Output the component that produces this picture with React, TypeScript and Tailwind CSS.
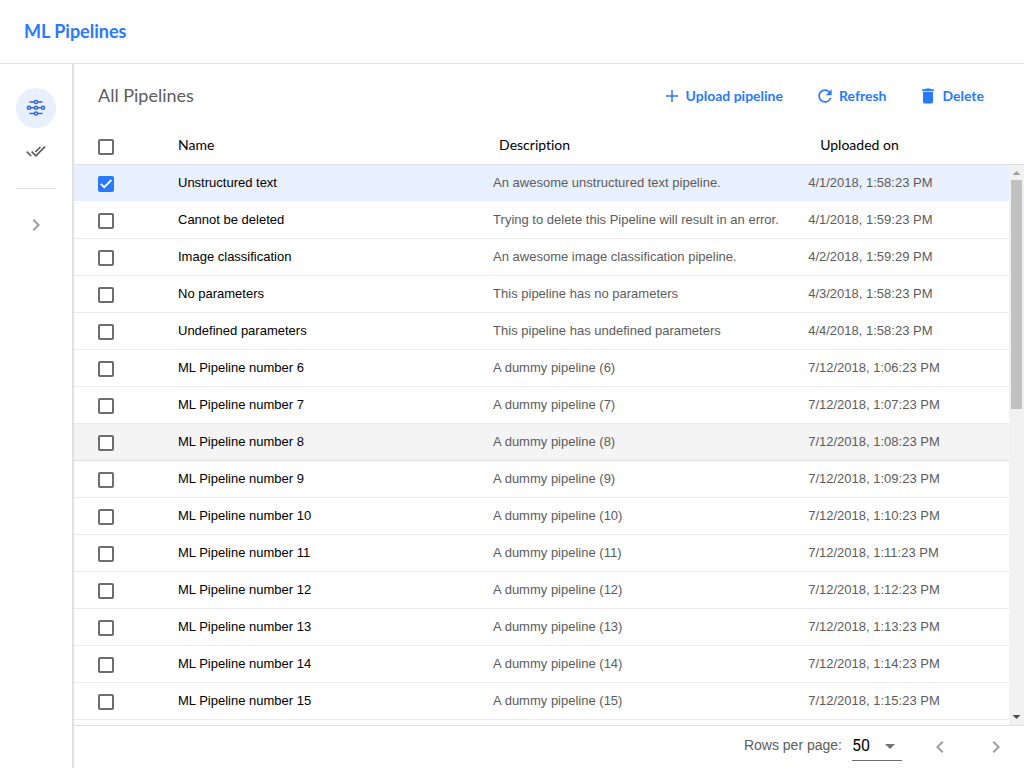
import { useState } from "react";
import { MdRefresh, MdDelete, MdChevronLeft, MdChevronRight, MdArrowDropDown } from "react-icons/md";

type Pipeline = { name: string; description: string; uploaded: string };

const PIPELINES: Pipeline[] = [
  { name: "Unstructured text", description: "An awesome unstructured text pipeline.", uploaded: "4/1/2018, 1:58:23 PM" },
  { name: "Cannot be deleted", description: "Trying to delete this Pipeline will result in an error.", uploaded: "4/1/2018, 1:59:23 PM" },
  { name: "Image classification", description: "An awesome image classification pipeline.", uploaded: "4/2/2018, 1:59:29 PM" },
  { name: "No parameters", description: "This pipeline has no parameters", uploaded: "4/3/2018, 1:58:23 PM" },
  { name: "Undefined parameters", description: "This pipeline has undefined parameters", uploaded: "4/4/2018, 1:58:23 PM" },
  ...Array.from({ length: 30 }, (_, i) => {
    const n = i + 6;
    return {
      name: `ML Pipeline number ${n}`,
      description: `A dummy pipeline (${n})`,
      uploaded: `7/12/2018, 1:${String(n).padStart(2, "0")}:23 PM`,
    };
  }),
];

const HOVERED_ROW = 7;

function Checkbox({ label, checked, onChange }: { label: string; checked: boolean; onChange: () => void }) {
  return (
    <label className="relative block size-4">
      <input
        type="checkbox"
        aria-label={label}
        checked={checked}
        onChange={onChange}
        className="block size-4 appearance-none rounded-[2px] border-2 border-[#6d6d6d] bg-white checked:border-[#2979ff] checked:bg-[#2979ff]"
      />
      {checked && (
        <svg viewBox="0 0 16 16" className="pointer-events-none absolute inset-0 size-4" fill="none" stroke="#fff" strokeWidth="1.8">
          <path d="M2.8 7.8 6.2 11.2 13.4 4" />
        </svg>
      )}
    </label>
  );
}

function PipelinesIcon() {
  return (
    <svg viewBox="0 0 20 20" className="size-5" fill="none" stroke="#3367d6" strokeWidth="1.5">
      <path d="M3.5 4h4.8M11.7 4h4.8M3.5 15.5h4.8M11.7 15.5h4.8M4.7 9.75h3.6M11.7 9.75h3.6" />
      <circle cx="10" cy="4" r="1.6" />
      <circle cx="10" cy="9.75" r="1.6" />
      <circle cx="10" cy="15.5" r="1.6" />
      <circle cx="3" cy="9.75" r="1.6" />
      <circle cx="17" cy="9.75" r="1.6" />
    </svg>
  );
}

function ExperimentsIcon() {
  return (
    <svg viewBox="0 0 20 12" className="h-3 w-5" fill="none" stroke="#5c5c5c" strokeWidth="1.7">
      <path d="M.8 5.6 5.2 10M5.6 5.6 9.9 9.8 19 .7M9.4 6 14.4 1" />
    </svg>
  );
}

function PlusIcon() {
  return (
    <svg viewBox="0 0 20 20" className="size-5" fill="none" stroke="currentColor" strokeWidth="1.5">
      <path d="M10 4v12M4 10h12" />
    </svg>
  );
}

const actionClass = "flex items-center gap-1 text-sm font-bold text-[#2979ff]";

export default function App() {
  const [selected, setSelected] = useState<number[]>([0]);
  const toggle = (i: number) =>
    setSelected((s) => (s.includes(i) ? s.filter((x) => x !== i) : [...s, i]));
  const all = selected.length === PIPELINES.length;

  return (
    <div className="flex h-screen flex-col bg-white font-['Liberation_Sans',Arial,sans-serif] text-[13px] text-black">
      <header className="flex h-16 shrink-0 items-center border-b border-[#e0e0e0] px-6 pb-0.5">
        <h1 className="font-['Lato',sans-serif] text-lg font-bold text-[#2979ff]">ML Pipelines</h1>
      </header>
      <div className="flex min-h-0 flex-1">
        <nav className="flex w-[74px] shrink-0 flex-col items-center border-r-2 border-[#e0e0e0] pt-6" aria-label="Main">
          <a href="#pipelines" aria-label="Pipelines" className="flex size-10 items-center justify-center rounded-full bg-[#e8effd]">
            <PipelinesIcon />
          </a>
          <a href="#experiments" aria-label="Experiments" className="mt-1 flex size-10 items-center justify-center">
            <ExperimentsIcon />
          </a>
          <hr className="mt-4 w-10 border-[#e0e0e0]" />
          <button type="button" aria-label="Expand menu" className="mt-6 text-[#9e9e9e]">
            <MdChevronRight className="size-6" />
          </button>
        </nav>
        <main className="flex min-w-0 flex-1 flex-col">
          <div className="flex h-16 shrink-0 items-center justify-between pr-10 pl-6 font-['Lato',sans-serif]">
            <h2 className="pb-0.5 text-lg text-[#5c5c5c]">All Pipelines</h2>
            <div className="flex items-center gap-8">
              <button type="button" className={actionClass}><PlusIcon />Upload pipeline</button>
              <button type="button" className={actionClass}><MdRefresh className="size-5" />Refresh</button>
              <button type="button" className={actionClass}><MdDelete className="size-5" />Delete</button>
            </div>
          </div>
          <table className="w-full shrink-0 table-fixed border-separate border-spacing-0 border-b border-[#e0e0e0]">
            <thead>
              <tr className="h-9 text-left font-['Lato',sans-serif] text-sm [font-variant-ligatures:none]">
                <th className="w-[104px] p-0 pt-0.5 pl-6"><Checkbox label="Select all" checked={all} onChange={() => setSelected(all ? [] : PIPELINES.map((_, i) => i))} /></th>
                <th className="w-[33.8%] p-0 pb-0.5 font-normal">Name</th>
                <th className="w-[33.8%] p-0 pb-0.5 font-normal">Description</th>
                <th className="p-0 pb-0.5 font-normal">Uploaded on</th>
              </tr>
            </thead>
          </table>
          <div className="flex min-h-0 flex-1">
            <div className="min-w-0 flex-1 overflow-y-auto [scrollbar-width:none]">
              <table className="w-full table-fixed border-separate border-spacing-0" aria-label="Pipelines">
                <tbody>
                  {PIPELINES.map((p, i) => (
                    <tr
                      key={p.name}
                      className={
                        "h-[37px] [&>td]:border-b " +
                        (selected.includes(i)
                          ? "bg-[#e8effd] [&>td]:border-white"
                          : i === HOVERED_ROW
                            ? "bg-[#f4f4f4] [&>td]:border-[#e0e0e0]"
                            : "[&>td]:border-[#ebebeb]")
                      }
                    >
                      <td className="w-[104px] p-0 pt-0.5 pl-6"><Checkbox label={`Select ${p.name}`} checked={selected.includes(i)} onChange={() => toggle(i)} /></td>
                      <td className="w-[33.7%] truncate p-0">{p.name}</td>
                      <td className="w-[33.7%] truncate p-0 text-[#5c5c5c]">{p.description}</td>
                      <td className="truncate p-0 text-[#5c5c5c]">{p.uploaded}</td>
                    </tr>
                  ))}
                </tbody>
              </table>
            </div>
            <div aria-hidden="true" className="flex w-[15px] shrink-0 flex-col items-center justify-between bg-[#f1f1f1]">
              <svg viewBox="0 0 15 15" className="size-[15px] shrink-0" fill="#a3a3a3"><path d="M3.5 10 7.5 6l4 4z" /></svg>
              <div className="min-h-0 w-full flex-1 pr-0.5 pl-0.5"><div className="h-[43.3%] bg-[#c1c1c1]" /></div>
              <svg viewBox="0 0 15 15" className="size-[15px] shrink-0" fill="#505050"><path d="M3.5 5h8l-4 4z" /></svg>
            </div>
          </div>
          <footer className="flex h-[43px] shrink-0 items-center justify-end border-t border-[#e0e0e0] pr-4 text-sm text-[#5c5c5c]">
            <label htmlFor="rows" className="pb-1">Rows per page:</label>
            <div className="relative mb-1 ml-2.5 border-b border-[#6d6d6d] pt-0.5">
              <select id="rows" defaultValue="50" className="block h-7 w-[50px] appearance-none font-['Roboto',sans-serif] text-base text-black">
                <option>10</option><option>20</option><option>50</option><option>100</option>
              </select>
              <MdArrowDropDown className="pointer-events-none absolute top-1 right-0 size-6 text-[#757575]" />
            </div>
            <button type="button" aria-label="Previous page" className="ml-[26px] text-[#9e9e9e]"><MdChevronLeft className="size-6" /></button>
            <button type="button" aria-label="Next page" className="ml-8 text-[#9e9e9e]"><MdChevronRight className="size-6" /></button>
          </footer>
        </main>
      </div>
    </div>
  );
}
